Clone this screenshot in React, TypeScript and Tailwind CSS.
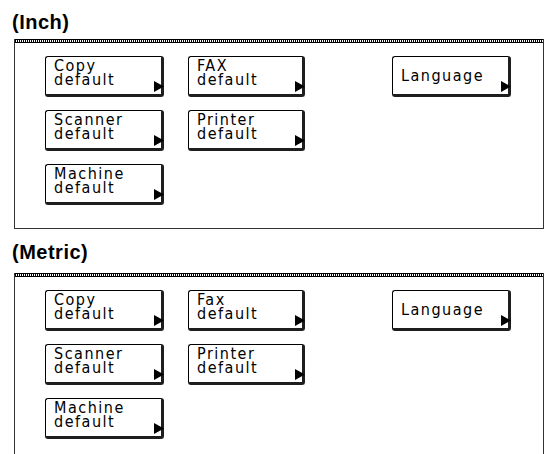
import React from "react";

const Arrow = () => (
  <svg
    className="absolute right-[-3px] bottom-[2px]"
    width="10"
    height="11"
    viewBox="0 0 10 11"
  >
    <polygon points="0,0 10,5.5 0,11" fill="#000" />
  </svg>
);

const Btn = ({ lines, w }: { lines: string[]; w: string }) => (
  <div
    className={`relative ${w} h-[41px] bg-white border-l border-t border-r-[3px] border-b-[3px] border-l-black border-t-black border-r-[#1e1e1e] border-b-[#1e1e1e] rounded-[3px] pl-[8px] ${
      lines.length === 1 ? "flex items-center" : "pt-[2px]"
    }`}
  >
    <div className="font-['DejaVu_Sans_Condensed','DejaVu_Sans',sans-serif] font-stretch-condensed text-[16px] leading-[13.5px] tracking-[1.5px] text-black">
      {lines.map((l) => (
        <div key={l}>{l}</div>
      ))}
    </div>
    <Arrow />
  </div>
);

const Panel = ({ fax }: { fax: string }) => (
  <div className="ml-[14px] w-[530px] h-[190px] border-l border-r border-b border-[#333] bg-white">
    <div className="h-[4px] border-t border-b border-black bg-[repeating-linear-gradient(90deg,#000_0_1px,#fff_1px_2px)]" />
    <div className="pl-[30px] pt-[13px] grid grid-cols-[143px_204px_119px] grid-rows-[41px_41px_41px] gap-y-[13px]">
      <Btn lines={["Copy", "default"]} w="w-[119px]" />
      <Btn lines={[fax, "default"]} w="w-[117px]" />
      <Btn lines={["Language"]} w="w-[119px]" />
      <Btn lines={["Scanner", "default"]} w="w-[119px]" />
      <Btn lines={["Printer", "default"]} w="w-[117px]" />
      <div />
      <Btn lines={["Machine", "default"]} w="w-[119px]" />
    </div>
  </div>
);

export default function App() {
  return (
    <div className="w-[546px] h-[454px] overflow-hidden bg-white">
      <div className="pt-[12px] pl-[12px] h-[32px] font-['Liberation_Sans',Arial,sans-serif] font-bold text-[20px] leading-[20px] tracking-[0.5px] text-black">
        (Inch)
      </div>
      <div className="mt-[7px]">
        <Panel fax="FAX" />
      </div>
      <div className="mt-[13px] pl-[12px] h-[20px] font-['Liberation_Sans',Arial,sans-serif] font-bold text-[20px] leading-[20px] tracking-[0.5px] text-black">
        (Metric)
      </div>
      <div className="mt-[11px]">
        <Panel fax="Fax" />
      </div>
    </div>
  );
}
